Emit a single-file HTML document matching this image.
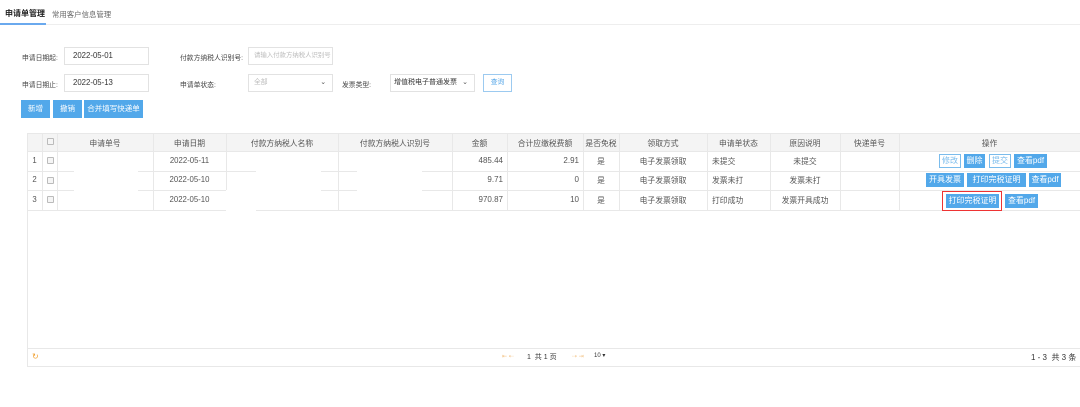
<!DOCTYPE html>
<html><head><meta charset="utf-8"><style>
*{margin:0;padding:0;box-sizing:border-box}
body{width:1080px;height:407px;background:#fff;font-family:"Liberation Sans","Noto Sans CJK SC",sans-serif;font-size:6.8px;color:#333;position:relative;overflow:hidden}
.a{position:absolute;white-space:nowrap}
.inp{position:absolute;border:1px solid #e2e2e2;height:18px;line-height:16px;padding-left:8px;font-size:7.8px;background:#fff;white-space:nowrap;overflow:hidden}
.btn{position:absolute;background:#52a8ea;color:#fff;height:18px;line-height:18px;text-align:center;font-size:7.5px;white-space:nowrap}
.ob{position:absolute;background:#52a8ea;color:#fff;height:14px;line-height:14px;text-align:center;font-size:8px;white-space:nowrap}
.obw{position:absolute;background:#fff;color:#7bbcec;border:1px solid #7bbcec;height:14px;line-height:12px;text-align:center;font-size:8px;white-space:nowrap}
.hl{position:absolute;left:27px;right:0;height:1px;background:#e8e8e8}
.vl{position:absolute;width:1px;background:#e8e8e8;top:133px;height:78px}
.c{position:absolute;text-align:center;font-size:7.8px;color:#555;white-space:nowrap}
.r{position:absolute;text-align:right;font-size:8px;color:#555}
.cb{position:absolute;width:7px;height:7px;border:1px solid #bbb;border-radius:1px;background:#f5f5f5}
</style></head><body>
<div class="a" style="left:5px;top:8px;font-size:8px;color:#222;font-weight:bold">申请单管理</div>
<div class="a" style="left:52px;top:9px;font-size:7.4px;color:#666">常用客户信息管理</div>
<div class="a" style="left:0;top:24px;width:1080px;height:1px;background:#eee"></div>
<div class="a" style="left:0;top:23px;width:46px;height:2px;background:#6aa9ee"></div>

<div class="a" style="left:22px;top:52px;color:#444">申请日期起:</div>
<div class="inp" style="left:64px;top:47px;width:85px;color:#333">2022-05-01</div>
<div class="a" style="left:180px;top:52px;color:#444">付款方纳税人识别号:</div>
<div class="inp" style="left:248px;top:47px;width:85px;color:#bbb;font-size:6.4px;padding-left:5px">请输入付款方纳税人识别号</div>
<div class="a" style="left:22px;top:79px;color:#444">申请日期止:</div>
<div class="inp" style="left:64px;top:74px;width:85px">2022-05-13</div>
<div class="a" style="left:180px;top:79px;color:#444">申请单状态:</div>
<div class="inp" style="left:248px;top:74px;width:85px;color:#bbb;font-size:6.8px;padding-left:5px">全部<span style="position:absolute;right:6px;color:#555">⌄</span></div>
<div class="a" style="left:342px;top:79px;color:#444">发票类型:</div>
<div class="inp" style="left:390px;top:74px;width:85px;color:#333;font-size:7px;padding-left:3px">增值税电子普通发票<span style="position:absolute;right:6px;color:#555">⌄</span></div>
<div class="a" style="left:483px;top:74px;width:29px;height:18px;border:1px solid #9ccaf0;color:#5aa8e8;text-align:center;line-height:16px;font-size:6.8px">查询</div>
<div class="btn" style="left:21px;top:100px;width:29px">新增</div>
<div class="btn" style="left:53px;top:100px;width:29px">撤销</div>
<div class="btn" style="left:84px;top:100px;width:59px">合并填写快递单</div>

<div class="a" style="left:27px;top:133px;width:1053px;height:18px;background:#f4f4f4"></div>
<div class="a" style="left:27px;top:133px;width:1px;height:233px;background:#e8e8e8"></div>
<div class="hl" style="top:133px"></div>
<div class="hl" style="top:151px"></div>
<div class="hl" style="top:171px"></div>
<div class="hl" style="top:190px"></div>
<div class="hl" style="top:210px"></div>
<div class="hl" style="top:348px"></div>
<div class="hl" style="top:366px"></div>
<div class="vl" style="left:42px"></div><div class="vl" style="left:57px"></div><div class="vl" style="left:153px"></div><div class="vl" style="left:226px"></div><div class="vl" style="left:338px"></div><div class="vl" style="left:452px"></div><div class="vl" style="left:507px"></div><div class="vl" style="left:583px"></div><div class="vl" style="left:619px"></div><div class="vl" style="left:707px"></div><div class="vl" style="left:770px"></div><div class="vl" style="left:840px"></div><div class="vl" style="left:899px"></div>
<div class="a" style="left:74px;top:152px;width:64px;height:58px;background:#fff"></div>
<div class="a" style="left:256px;top:152px;width:65px;height:58px;background:#fff"></div>
<div class="a" style="left:357px;top:152px;width:65px;height:58px;background:#fff"></div>
<div class="a" style="left:226px;top:190px;width:30px;height:21px;background:#fff"></div>

<div class="cb" style="left:47px;top:138px"></div>
<div class="c" style="left:57px;width:96px;top:138px">申请单号</div>
<div class="c" style="left:153px;width:73px;top:138px">申请日期</div>
<div class="c" style="left:226px;width:112px;top:138px">付款方纳税人名称</div>
<div class="c" style="left:338px;width:114px;top:138px">付款方纳税人识别号</div>
<div class="c" style="left:452px;width:55px;top:138px">金额</div>
<div class="c" style="left:507px;width:76px;top:138px">合计应缴税费额</div>
<div class="c" style="left:583px;width:36px;top:138px">是否免税</div>
<div class="c" style="left:619px;width:88px;top:138px">领取方式</div>
<div class="c" style="left:707px;width:63px;top:138px">申请单状态</div>
<div class="c" style="left:770px;width:70px;top:138px">原因说明</div>
<div class="c" style="left:840px;width:59px;top:138px">快递单号</div>
<div class="c" style="left:899px;width:181px;top:138px">操作</div>

<div class="c" style="left:27px;width:15px;top:156px">1</div><div class="cb" style="left:47px;top:157px"></div>
<div class="c" style="left:153px;width:73px;top:156px">2022-05-11</div>
<div class="r" style="left:452px;width:51px;top:156px">485.44</div>
<div class="r" style="left:507px;width:72px;top:156px">2.91</div>
<div class="c" style="left:583px;width:36px;top:156px">是</div>
<div class="c" style="left:619px;width:88px;top:156px">电子发票领取</div>
<div class="a" style="left:712px;top:156px;font-size:7.8px;color:#555">未提交</div>
<div class="c" style="left:770px;width:70px;top:156px">未提交</div>
<div class="obw" style="left:939px;top:154px;width:22px">修改</div>
<div class="ob" style="left:964px;top:154px;width:21px">删除</div>
<div class="obw" style="left:989px;top:154px;width:22px">提交</div>
<div class="ob" style="left:1014px;top:154px;width:33px">查看pdf</div>

<div class="c" style="left:27px;width:15px;top:175px">2</div><div class="cb" style="left:47px;top:177px"></div>
<div class="c" style="left:153px;width:73px;top:175px">2022-05-10</div>
<div class="r" style="left:452px;width:51px;top:175px">9.71</div>
<div class="r" style="left:507px;width:72px;top:175px">0</div>
<div class="c" style="left:583px;width:36px;top:175px">是</div>
<div class="c" style="left:619px;width:88px;top:175px">电子发票领取</div>
<div class="a" style="left:712px;top:175px;font-size:7.8px;color:#555">发票未打</div>
<div class="c" style="left:770px;width:70px;top:175px">发票未打</div>
<div class="ob" style="left:926px;top:173px;width:38px">开具发票</div>
<div class="ob" style="left:967px;top:173px;width:59px">打印完税证明</div>
<div class="ob" style="left:1029px;top:173px;width:32px">查看pdf</div>

<div class="c" style="left:27px;width:15px;top:195px">3</div><div class="cb" style="left:47px;top:196px"></div>
<div class="c" style="left:153px;width:73px;top:195px">2022-05-10</div>
<div class="r" style="left:452px;width:51px;top:195px">970.87</div>
<div class="r" style="left:507px;width:72px;top:195px">10</div>
<div class="c" style="left:583px;width:36px;top:195px">是</div>
<div class="c" style="left:619px;width:88px;top:195px">电子发票领取</div>
<div class="a" style="left:712px;top:195px;font-size:7.8px;color:#555">打印成功</div>
<div class="c" style="left:770px;width:70px;top:195px">发票开具成功</div>
<div class="a" style="left:942px;top:191px;width:60px;height:20px;border:1px solid #e33"></div>
<div class="ob" style="left:946px;top:194px;width:53px">打印完税证明</div>
<div class="ob" style="left:1005px;top:194px;width:33px">查看pdf</div>

<div class="a" style="left:32px;top:352px;color:#f0a030;font-size:8px">↻</div>
<div class="a" style="left:502px;top:353px;font-size:6px;color:#f3c58a">⇤ ⇠</div>
<div class="a" style="left:527px;top:352px;font-size:7px;color:#333">1 &nbsp;共 1 页</div>
<div class="a" style="left:572px;top:353px;font-size:6px;color:#f3c58a">⇢ ⇥</div>
<div class="a" style="left:594px;top:352px;font-size:6px;color:#333">10 ▾</div>
<div class="a" style="left:1031px;top:352px;font-size:8px;color:#333">1 - 3 &nbsp;共 3 条</div>
</body></html>
